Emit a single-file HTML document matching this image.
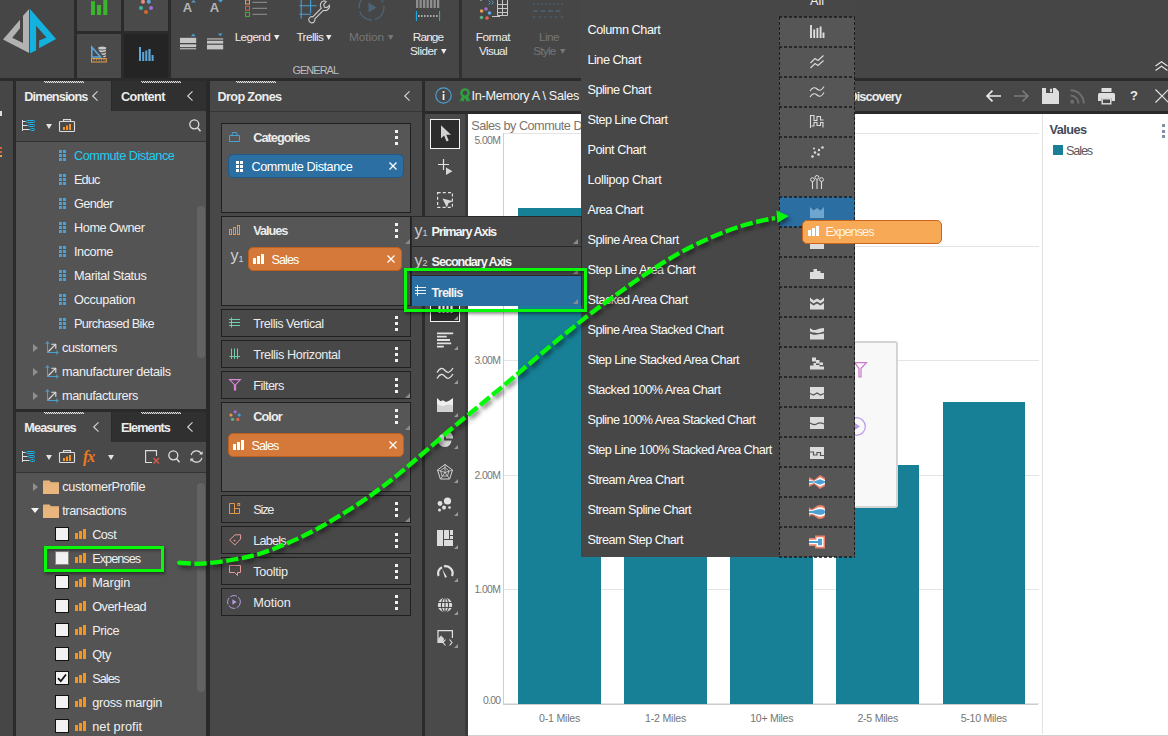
<!DOCTYPE html>
<html lang="en"><head><meta charset="utf-8"><title>Discovery</title><style>
html,body{margin:0;padding:0;background:#464646}
body{width:1168px;height:736px;overflow:hidden;background:#464646;position:relative;font-family:"Liberation Sans",sans-serif;}
.r{position:absolute;box-sizing:border-box}
.t{position:absolute;white-space:nowrap;}
svg{position:absolute;overflow:visible}
</style></head><body>
<!-- p1_base -->
<div class="r" style="left:0px;top:78px;width:1168px;height:3px;background:#2b2b2b;"></div>
<div class="r" style="left:74px;top:0px;width:3px;height:78px;background:#2b2b2b;"></div>
<div class="r" style="left:77px;top:0px;width:44px;height:31px;background:#4a4a4a;"></div>
<div class="r" style="left:124px;top:0px;width:44px;height:31px;background:#4a4a4a;"></div>
<div class="r" style="left:77px;top:34px;width:44px;height:44px;background:#4a4a4a;"></div>
<div class="r" style="left:124px;top:34px;width:44px;height:44px;background:#242424;"></div>
<div class="r" style="left:121px;top:0px;width:3px;height:78px;background:#2b2b2b;"></div>
<div class="r" style="left:77px;top:31px;width:93px;height:3px;background:#2b2b2b;"></div>
<div class="r" style="left:168px;top:0px;width:3px;height:78px;background:#2b2b2b;"></div>
<div class="r" style="left:459px;top:0px;width:3px;height:78px;background:#303030;"></div>
<div class="r" style="left:0px;top:81px;width:13px;height:655px;background:#464646;"></div>
<div class="r" style="left:13px;top:81px;width:3px;height:655px;background:#2b2b2b;"></div>
<div class="r" style="left:16px;top:81px;width:190px;height:30px;background:#303030;"></div>
<div class="r" style="left:16px;top:81px;width:95px;height:30px;background:#494949;"></div>
<div class="r" style="left:16px;top:111px;width:190px;height:30px;background:#494949;"></div>
<div class="r" style="left:16px;top:141px;width:190px;height:1px;background:#333;"></div>
<div class="r" style="left:16px;top:142px;width:190px;height:267px;background:#545454;"></div>
<div class="r" style="left:16px;top:409px;width:190px;height:3px;background:#2a2a2a;"></div>
<div class="r" style="left:16px;top:412px;width:190px;height:30px;background:#303030;"></div>
<div class="r" style="left:16px;top:412px;width:95px;height:30px;background:#494949;"></div>
<div class="r" style="left:16px;top:442px;width:190px;height:30px;background:#494949;"></div>
<div class="r" style="left:16px;top:471.5px;width:190px;height:1.5px;background:#333;"></div>
<div class="r" style="left:16px;top:473px;width:190px;height:263px;background:#545454;"></div>
<div class="r" style="left:206px;top:81px;width:4px;height:655px;background:#292929;"></div>
<div class="r" style="left:210px;top:81px;width:212px;height:30px;background:#484848;"></div>
<div class="r" style="left:210px;top:111px;width:212px;height:1px;background:#363636;"></div>
<div class="r" style="left:210px;top:112px;width:212px;height:624px;background:#484848;"></div>
<div class="r" style="left:422px;top:81px;width:3px;height:655px;background:#2b2b2b;"></div>
<div class="r" style="left:425px;top:81px;width:743px;height:30px;background:#484848;"></div>
<div class="r" style="left:425px;top:111px;width:743px;height:3px;background:#2a2a2a;"></div>
<div class="r" style="left:425px;top:114px;width:40px;height:622px;background:#4a4a4a;"></div>
<div class="r" style="left:465px;top:114px;width:3px;height:622px;background:#3a3a3a;"></div>
<div class="r" style="left:468px;top:114px;width:700px;height:622px;background:#ffffff;"></div>
<!-- p2_left -->
<div class="r" style="left:0px;top:111px;width:2px;height:5px;background:#e6dcd6;"></div>
<div class="r" style="left:0px;top:147px;width:2px;height:1.5px;background:#d9603a;"></div>
<div class="r" style="left:0px;top:151px;width:2px;height:1.5px;background:#d9603a;"></div>
<div class="r" style="left:0px;top:155px;width:2px;height:1.5px;background:#e8a050;"></div>
<div class="r" style="left:44px;top:81px;width:40px;height:1px;background:repeating-linear-gradient(90deg,#e4e4e4 0 1px,rgba(228,228,228,.25) 1px 2px)"></div><div class="r" style="left:45px;top:82px;width:39px;height:1px;background:repeating-linear-gradient(90deg,#e4e4e4 0 1px,rgba(228,228,228,.25) 1px 2px)"></div>
<div class="r" style="left:141px;top:81px;width:40px;height:1px;background:repeating-linear-gradient(90deg,#e4e4e4 0 1px,rgba(228,228,228,.25) 1px 2px)"></div><div class="r" style="left:142px;top:82px;width:39px;height:1px;background:repeating-linear-gradient(90deg,#e4e4e4 0 1px,rgba(228,228,228,.25) 1px 2px)"></div>
<div class="r" style="left:111px;top:81px;width:1px;height:30px;background:#2a2a2a;"></div>
<span class="t" style="top:88px;left:24.3px;font-size:12.7px;line-height:18px;color:#ececec;font-weight:700;letter-spacing:-0.868px;">Dimensions</span>
<svg style="left:92.4px;top:91px" width="6" height="10" viewBox="0 0 6 10"><path d="M5.5 0.3 L0.7 5 L5.5 9.7" fill="none" stroke="#d8d8d8" stroke-width="1.1"/></svg>
<span class="t" style="top:88px;left:121.0px;font-size:12.7px;line-height:18px;color:#ececec;font-weight:700;letter-spacing:-0.567px;">Content</span>
<svg style="left:187.3px;top:91px" width="6" height="10" viewBox="0 0 6 10"><path d="M5.5 0.3 L0.7 5 L5.5 9.7" fill="none" stroke="#d8d8d8" stroke-width="1.1"/></svg>
<svg style="left:22px;top:120px" width="13" height="11" viewBox="0 0 13 11"><path d="M0.5 0V11M0.5 1.5H3.5M0.5 5.5H5.5M0.5 9.5H7.5" stroke="#dddddd" stroke-width="1" fill="none"/><rect x="4.5" y="0.5" width="8" height="2" rx="1" fill="none" stroke="#19b5f1" stroke-width="1"/><rect x="6.5" y="4.5" width="6" height="2" rx="1" fill="none" stroke="#19b5f1" stroke-width="1"/><rect x="8.5" y="8.5" width="4" height="2" rx="1" fill="none" stroke="#19b5f1" stroke-width="1"/></svg>
<svg style="left:46px;top:124px" width="6" height="5" viewBox="0 0 6 5"><path d="M0 0H6 L3 5 Z" fill="#e4e4e4"/></svg>
<svg style="left:59px;top:119px" width="16" height="13" viewBox="0 0 16 13"><rect x="0.5" y="2.5" width="15" height="10" rx="0.8" fill="none" stroke="#ddd" stroke-width="1.1"/><path d="M4.5 2.5V0.6H11.5V2.5" fill="none" stroke="#ddd" stroke-width="1.1"/><rect x="4" y="8" width="2" height="3" fill="#f7941d"/><rect x="7" y="6.5" width="2" height="4.5" fill="#f7941d"/><rect x="10" y="5" width="2" height="6" fill="#f7941d"/></svg>
<svg style="left:189px;top:119px" width="12" height="13" viewBox="0 0 12 13"><circle cx="5.3" cy="5.3" r="4.5" fill="none" stroke="#ddd" stroke-width="1.3"/><path d="M8.6 8.8L11.5 12.2" stroke="#ddd" stroke-width="1.5"/></svg>
<svg style="left:59px;top:150px" width="7" height="11" viewBox="0 0 7 11"><rect x="0" y="0" width="3" height="3" fill="#4a9fd3"/><rect x="4" y="0" width="3" height="3" fill="#4a9fd3"/><rect x="0" y="4" width="3" height="3" fill="#4a9fd3"/><rect x="4" y="4" width="3" height="3" fill="#4a9fd3"/><rect x="0" y="8" width="3" height="3" fill="#4a9fd3"/><rect x="4" y="8" width="3" height="3" fill="#4a9fd3"/></svg>
<span class="t" style="top:147px;left:74.0px;font-size:12.7px;line-height:18px;color:#20cdf0;letter-spacing:-0.468px;">Commute Distance</span>
<svg style="left:59px;top:174px" width="7" height="11" viewBox="0 0 7 11"><rect x="0" y="0" width="3" height="3" fill="#4a9fd3"/><rect x="4" y="0" width="3" height="3" fill="#4a9fd3"/><rect x="0" y="4" width="3" height="3" fill="#4a9fd3"/><rect x="4" y="4" width="3" height="3" fill="#4a9fd3"/><rect x="0" y="8" width="3" height="3" fill="#4a9fd3"/><rect x="4" y="8" width="3" height="3" fill="#4a9fd3"/></svg>
<span class="t" style="top:171px;left:74.0px;font-size:12.7px;line-height:18px;color:#f0f0f0;letter-spacing:-0.887px;">Educ</span>
<svg style="left:59px;top:198px" width="7" height="11" viewBox="0 0 7 11"><rect x="0" y="0" width="3" height="3" fill="#4a9fd3"/><rect x="4" y="0" width="3" height="3" fill="#4a9fd3"/><rect x="0" y="4" width="3" height="3" fill="#4a9fd3"/><rect x="4" y="4" width="3" height="3" fill="#4a9fd3"/><rect x="0" y="8" width="3" height="3" fill="#4a9fd3"/><rect x="4" y="8" width="3" height="3" fill="#4a9fd3"/></svg>
<span class="t" style="top:195px;left:74.0px;font-size:12.7px;line-height:18px;color:#f0f0f0;letter-spacing:-0.560px;">Gender</span>
<svg style="left:59px;top:222px" width="7" height="11" viewBox="0 0 7 11"><rect x="0" y="0" width="3" height="3" fill="#4a9fd3"/><rect x="4" y="0" width="3" height="3" fill="#4a9fd3"/><rect x="0" y="4" width="3" height="3" fill="#4a9fd3"/><rect x="4" y="4" width="3" height="3" fill="#4a9fd3"/><rect x="0" y="8" width="3" height="3" fill="#4a9fd3"/><rect x="4" y="8" width="3" height="3" fill="#4a9fd3"/></svg>
<span class="t" style="top:219px;left:74.0px;font-size:12.7px;line-height:18px;color:#f0f0f0;letter-spacing:-0.421px;">Home Owner</span>
<svg style="left:59px;top:246px" width="7" height="11" viewBox="0 0 7 11"><rect x="0" y="0" width="3" height="3" fill="#4a9fd3"/><rect x="4" y="0" width="3" height="3" fill="#4a9fd3"/><rect x="0" y="4" width="3" height="3" fill="#4a9fd3"/><rect x="4" y="4" width="3" height="3" fill="#4a9fd3"/><rect x="0" y="8" width="3" height="3" fill="#4a9fd3"/><rect x="4" y="8" width="3" height="3" fill="#4a9fd3"/></svg>
<span class="t" style="top:243px;left:74.0px;font-size:12.7px;line-height:18px;color:#f0f0f0;letter-spacing:-0.441px;">Income</span>
<svg style="left:59px;top:270px" width="7" height="11" viewBox="0 0 7 11"><rect x="0" y="0" width="3" height="3" fill="#4a9fd3"/><rect x="4" y="0" width="3" height="3" fill="#4a9fd3"/><rect x="0" y="4" width="3" height="3" fill="#4a9fd3"/><rect x="4" y="4" width="3" height="3" fill="#4a9fd3"/><rect x="0" y="8" width="3" height="3" fill="#4a9fd3"/><rect x="4" y="8" width="3" height="3" fill="#4a9fd3"/></svg>
<span class="t" style="top:267px;left:74.0px;font-size:12.7px;line-height:18px;color:#f0f0f0;letter-spacing:-0.367px;">Marital Status</span>
<svg style="left:59px;top:294px" width="7" height="11" viewBox="0 0 7 11"><rect x="0" y="0" width="3" height="3" fill="#4a9fd3"/><rect x="4" y="0" width="3" height="3" fill="#4a9fd3"/><rect x="0" y="4" width="3" height="3" fill="#4a9fd3"/><rect x="4" y="4" width="3" height="3" fill="#4a9fd3"/><rect x="0" y="8" width="3" height="3" fill="#4a9fd3"/><rect x="4" y="8" width="3" height="3" fill="#4a9fd3"/></svg>
<span class="t" style="top:291px;left:74.0px;font-size:12.7px;line-height:18px;color:#f0f0f0;letter-spacing:-0.324px;">Occupation</span>
<svg style="left:59px;top:318px" width="7" height="11" viewBox="0 0 7 11"><rect x="0" y="0" width="3" height="3" fill="#4a9fd3"/><rect x="4" y="0" width="3" height="3" fill="#4a9fd3"/><rect x="0" y="4" width="3" height="3" fill="#4a9fd3"/><rect x="4" y="4" width="3" height="3" fill="#4a9fd3"/><rect x="0" y="8" width="3" height="3" fill="#4a9fd3"/><rect x="4" y="8" width="3" height="3" fill="#4a9fd3"/></svg>
<span class="t" style="top:315px;left:74.0px;font-size:12.7px;line-height:18px;color:#f0f0f0;letter-spacing:-0.639px;">Purchased Bike</span>
<svg style="left:33px;top:344.2px" width="5" height="8" viewBox="0 0 5 8"><path d="M0 0L5 4L0 8Z" fill="#8f8f8f"/></svg>
<svg style="left:45px;top:341.2px" width="14" height="14" viewBox="0 0 14 14"><path d="M2.5 1V11.5H13" fill="none" stroke="#4a9fd3" stroke-width="1.1"/><path d="M0.5 3L2.5 0.6L4.5 3" fill="none" stroke="#4a9fd3" stroke-width="1"/><path d="M11 9.5L13.4 11.5L11 13.5" fill="none" stroke="#4a9fd3" stroke-width="1"/><path d="M3.5 10.5L10.3 3.7" stroke="#e0e0e0" stroke-width="1.1"/><path d="M6.3 3.2H10.8V7.7" fill="none" stroke="#e0e0e0" stroke-width="1.1"/></svg>
<span class="t" style="top:339px;left:62.0px;font-size:12.7px;line-height:18px;color:#f0f0f0;letter-spacing:-0.397px;">customers</span>
<svg style="left:33px;top:368.2px" width="5" height="8" viewBox="0 0 5 8"><path d="M0 0L5 4L0 8Z" fill="#8f8f8f"/></svg>
<svg style="left:45px;top:365.2px" width="14" height="14" viewBox="0 0 14 14"><path d="M2.5 1V11.5H13" fill="none" stroke="#4a9fd3" stroke-width="1.1"/><path d="M0.5 3L2.5 0.6L4.5 3" fill="none" stroke="#4a9fd3" stroke-width="1"/><path d="M11 9.5L13.4 11.5L11 13.5" fill="none" stroke="#4a9fd3" stroke-width="1"/><path d="M3.5 10.5L10.3 3.7" stroke="#e0e0e0" stroke-width="1.1"/><path d="M6.3 3.2H10.8V7.7" fill="none" stroke="#e0e0e0" stroke-width="1.1"/></svg>
<span class="t" style="top:363px;left:62.0px;font-size:12.7px;line-height:18px;color:#f0f0f0;letter-spacing:-0.303px;">manufacturer details</span>
<svg style="left:33px;top:392.2px" width="5" height="8" viewBox="0 0 5 8"><path d="M0 0L5 4L0 8Z" fill="#8f8f8f"/></svg>
<svg style="left:45px;top:389.2px" width="14" height="14" viewBox="0 0 14 14"><path d="M2.5 1V11.5H13" fill="none" stroke="#4a9fd3" stroke-width="1.1"/><path d="M0.5 3L2.5 0.6L4.5 3" fill="none" stroke="#4a9fd3" stroke-width="1"/><path d="M11 9.5L13.4 11.5L11 13.5" fill="none" stroke="#4a9fd3" stroke-width="1"/><path d="M3.5 10.5L10.3 3.7" stroke="#e0e0e0" stroke-width="1.1"/><path d="M6.3 3.2H10.8V7.7" fill="none" stroke="#e0e0e0" stroke-width="1.1"/></svg>
<span class="t" style="top:387px;left:62.0px;font-size:12.7px;line-height:18px;color:#f0f0f0;letter-spacing:-0.398px;">manufacturers</span>
<div class="r" style="left:197px;top:206px;width:8px;height:152px;background:#636363;border-radius:4px"></div>
<div class="r" style="left:44px;top:412px;width:40px;height:1px;background:repeating-linear-gradient(90deg,#e4e4e4 0 1px,rgba(228,228,228,.25) 1px 2px)"></div><div class="r" style="left:45px;top:413px;width:39px;height:1px;background:repeating-linear-gradient(90deg,#e4e4e4 0 1px,rgba(228,228,228,.25) 1px 2px)"></div>
<div class="r" style="left:141px;top:412px;width:40px;height:1px;background:repeating-linear-gradient(90deg,#e4e4e4 0 1px,rgba(228,228,228,.25) 1px 2px)"></div><div class="r" style="left:142px;top:413px;width:39px;height:1px;background:repeating-linear-gradient(90deg,#e4e4e4 0 1px,rgba(228,228,228,.25) 1px 2px)"></div>
<div class="r" style="left:111px;top:412px;width:1px;height:30px;background:#2a2a2a;"></div>
<span class="t" style="top:419px;left:24.3px;font-size:12.7px;line-height:18px;color:#ececec;font-weight:700;letter-spacing:-0.887px;">Measures</span>
<svg style="left:92.8px;top:422px" width="6" height="10" viewBox="0 0 6 10"><path d="M5.5 0.3 L0.7 5 L5.5 9.7" fill="none" stroke="#d8d8d8" stroke-width="1.1"/></svg>
<span class="t" style="top:419px;left:121.0px;font-size:12.7px;line-height:18px;color:#ececec;font-weight:700;letter-spacing:-0.934px;">Elements</span>
<svg style="left:187.3px;top:422px" width="6" height="10" viewBox="0 0 6 10"><path d="M5.5 0.3 L0.7 5 L5.5 9.7" fill="none" stroke="#d8d8d8" stroke-width="1.1"/></svg>
<svg style="left:22px;top:451px" width="13" height="11" viewBox="0 0 13 11"><path d="M0.5 0V11M0.5 1.5H3.5M0.5 5.5H5.5M0.5 9.5H7.5" stroke="#dddddd" stroke-width="1" fill="none"/><rect x="4.5" y="0.5" width="8" height="2" rx="1" fill="none" stroke="#19b5f1" stroke-width="1"/><rect x="6.5" y="4.5" width="6" height="2" rx="1" fill="none" stroke="#19b5f1" stroke-width="1"/><rect x="8.5" y="8.5" width="4" height="2" rx="1" fill="none" stroke="#19b5f1" stroke-width="1"/></svg>
<svg style="left:46px;top:455px" width="6" height="5" viewBox="0 0 6 5"><path d="M0 0H6 L3 5 Z" fill="#e4e4e4"/></svg>
<svg style="left:59px;top:450px" width="16" height="13" viewBox="0 0 16 13"><rect x="0.5" y="2.5" width="15" height="10" rx="0.8" fill="none" stroke="#ddd" stroke-width="1.1"/><path d="M4.5 2.5V0.6H11.5V2.5" fill="none" stroke="#ddd" stroke-width="1.1"/><rect x="4" y="8" width="2" height="3" fill="#f7941d"/><rect x="7" y="6.5" width="2" height="4.5" fill="#f7941d"/><rect x="10" y="5" width="2" height="6" fill="#f7941d"/></svg>
<span class="t" style="top:446px;left:83.0px;font-size:16px;line-height:22px;color:#ef7a22;font-weight:700;font-style:italic;font-family:'Liberation Serif',serif;letter-spacing:-1px">fx</span>
<svg style="left:108px;top:455px" width="6" height="5" viewBox="0 0 6 5"><path d="M0 0H6 L3 5 Z" fill="#e4e4e4"/></svg>
<svg style="left:145px;top:450px" width="15" height="14" viewBox="0 0 15 14"><path d="M7 12.5H0.6V0.6H11.5V6" fill="none" stroke="#ddd" stroke-width="1.1"/><path d="M8.5 8L14 13.5M14 8L8.5 13.5" stroke="#e05a4a" stroke-width="1.3"/></svg>
<svg style="left:168px;top:450px" width="12" height="13" viewBox="0 0 12 13"><circle cx="5.3" cy="5.3" r="4.5" fill="none" stroke="#ddd" stroke-width="1.3"/><path d="M8.6 8.8L11.5 12.2" stroke="#ddd" stroke-width="1.5"/></svg>
<svg style="left:190px;top:450px" width="13" height="13" viewBox="0 0 13 13"><path d="M1.2 5.2A5.4 5.4 0 0 1 11.3 3.8" fill="none" stroke="#ddd" stroke-width="1.2"/><path d="M11.8 7.8A5.4 5.4 0 0 1 1.7 9.2" fill="none" stroke="#ddd" stroke-width="1.2"/><path d="M12.6 1.2V4.6H9.2Z" fill="#ddd"/><path d="M0.4 11.8V8.4H3.8Z" fill="#ddd"/></svg>
<svg style="left:33px;top:483px" width="5" height="8" viewBox="0 0 5 8"><path d="M0 0L5 4L0 8Z" fill="#8f8f8f"/></svg>
<svg style="left:43px;top:480px" width="16" height="14" viewBox="0 0 16 14"><path d="M0 1.2Q0 0.5 0.7 0.5H6.5L8 2.2H16V14H0Z" fill="#e9b77e"/><path d="M0 3H16" stroke="#d9a468" stroke-width="0.6"/></svg>
<span class="t" style="top:478px;left:62.2px;font-size:12.7px;line-height:18px;color:#f0f0f0;letter-spacing:-0.348px;">customerProfile</span>
<svg style="left:31.4px;top:507.6px" width="8" height="5" viewBox="0 0 8 5"><path d="M0 0H8L4 5Z" fill="#f4f4f4"/></svg>
<svg style="left:43px;top:504px" width="16" height="14" viewBox="0 0 16 14"><path d="M0 1.2Q0 0.5 0.7 0.5H6.5L8 2.2H16V14H0Z" fill="#e9b77e"/><path d="M0 3H16" stroke="#d9a468" stroke-width="0.6"/></svg>
<span class="t" style="top:502px;left:62.2px;font-size:12.7px;line-height:18px;color:#f0f0f0;letter-spacing:-0.373px;">transactions</span>
<div class="r" style="left:55px;top:527px;width:14px;height:14px;background:#f2f2f2;border:1px solid #111"></div>
<svg style="left:75px;top:529px" width="11" height="10" viewBox="0 0 11 10"><rect x="0" y="4" width="3" height="6" fill="#f7941d"/><rect x="4" y="2" width="3" height="8" fill="#f7941d"/><rect x="8" y="0" width="3" height="10" fill="#f7941d"/></svg>
<span class="t" style="top:526px;left:92.2px;font-size:12.7px;line-height:18px;color:#f0f0f0;letter-spacing:-0.528px;">Cost</span>
<div class="r" style="left:55px;top:551px;width:14px;height:14px;background:#f2f2f2;border:1px solid #8a8a8a"></div>
<svg style="left:75px;top:553px" width="11" height="10" viewBox="0 0 11 10"><rect x="0" y="4" width="3" height="6" fill="#f7941d"/><rect x="4" y="2" width="3" height="8" fill="#f7941d"/><rect x="8" y="0" width="3" height="10" fill="#f7941d"/></svg>
<span class="t" style="top:550px;left:92.2px;font-size:12.7px;line-height:18px;color:#f0f0f0;letter-spacing:-0.972px;">Expenses</span>
<div class="r" style="left:55px;top:575px;width:14px;height:14px;background:#f2f2f2;border:1px solid #111"></div>
<svg style="left:75px;top:577px" width="11" height="10" viewBox="0 0 11 10"><rect x="0" y="4" width="3" height="6" fill="#f7941d"/><rect x="4" y="2" width="3" height="8" fill="#f7941d"/><rect x="8" y="0" width="3" height="10" fill="#f7941d"/></svg>
<span class="t" style="top:574px;left:92.2px;font-size:12.7px;line-height:18px;color:#f0f0f0;letter-spacing:-0.137px;">Margin</span>
<div class="r" style="left:55px;top:599px;width:14px;height:14px;background:#f2f2f2;border:1px solid #111"></div>
<svg style="left:75px;top:601px" width="11" height="10" viewBox="0 0 11 10"><rect x="0" y="4" width="3" height="6" fill="#f7941d"/><rect x="4" y="2" width="3" height="8" fill="#f7941d"/><rect x="8" y="0" width="3" height="10" fill="#f7941d"/></svg>
<span class="t" style="top:598px;left:92.2px;font-size:12.7px;line-height:18px;color:#f0f0f0;letter-spacing:-0.485px;">OverHead</span>
<div class="r" style="left:55px;top:623px;width:14px;height:14px;background:#f2f2f2;border:1px solid #111"></div>
<svg style="left:75px;top:625px" width="11" height="10" viewBox="0 0 11 10"><rect x="0" y="4" width="3" height="6" fill="#f7941d"/><rect x="4" y="2" width="3" height="8" fill="#f7941d"/><rect x="8" y="0" width="3" height="10" fill="#f7941d"/></svg>
<span class="t" style="top:622px;left:92.2px;font-size:12.7px;line-height:18px;color:#f0f0f0;letter-spacing:-0.387px;">Price</span>
<div class="r" style="left:55px;top:647px;width:14px;height:14px;background:#f2f2f2;border:1px solid #111"></div>
<svg style="left:75px;top:649px" width="11" height="10" viewBox="0 0 11 10"><rect x="0" y="4" width="3" height="6" fill="#f7941d"/><rect x="4" y="2" width="3" height="8" fill="#f7941d"/><rect x="8" y="0" width="3" height="10" fill="#f7941d"/></svg>
<span class="t" style="top:646px;left:92.2px;font-size:12.7px;line-height:18px;color:#f0f0f0;letter-spacing:-0.252px;">Qty</span>
<div class="r" style="left:55px;top:671px;width:14px;height:14px;background:#f2f2f2;border:1px solid #111"></div><svg style="left:57px;top:673px" width="10" height="10" viewBox="0 0 10 10"><path d="M1 5.2L3.8 8.2L9 1.5" fill="none" stroke="#111" stroke-width="1.8"/></svg>
<svg style="left:75px;top:673px" width="11" height="10" viewBox="0 0 11 10"><rect x="0" y="4" width="3" height="6" fill="#f7941d"/><rect x="4" y="2" width="3" height="8" fill="#f7941d"/><rect x="8" y="0" width="3" height="10" fill="#f7941d"/></svg>
<span class="t" style="top:670px;left:92.2px;font-size:12.7px;line-height:18px;color:#f0f0f0;letter-spacing:-0.954px;">Sales</span>
<div class="r" style="left:55px;top:695px;width:14px;height:14px;background:#f2f2f2;border:1px solid #111"></div>
<svg style="left:75px;top:697px" width="11" height="10" viewBox="0 0 11 10"><rect x="0" y="4" width="3" height="6" fill="#f7941d"/><rect x="4" y="2" width="3" height="8" fill="#f7941d"/><rect x="8" y="0" width="3" height="10" fill="#f7941d"/></svg>
<span class="t" style="top:694px;left:92.2px;font-size:12.7px;line-height:18px;color:#f0f0f0;letter-spacing:-0.284px;">gross margin</span>
<div class="r" style="left:55px;top:719px;width:14px;height:14px;background:#f2f2f2;border:1px solid #111"></div>
<svg style="left:75px;top:721px" width="11" height="10" viewBox="0 0 11 10"><rect x="0" y="4" width="3" height="6" fill="#f7941d"/><rect x="4" y="2" width="3" height="8" fill="#f7941d"/><rect x="8" y="0" width="3" height="10" fill="#f7941d"/></svg>
<span class="t" style="top:718px;left:92.2px;font-size:12.7px;line-height:18px;color:#f0f0f0;letter-spacing:0.058px;">net profit</span>
<div class="r" style="left:197px;top:483px;width:8px;height:209px;background:#636363;border-radius:4px"></div>
<!-- p3_drop -->
<div class="r" style="left:236px;top:81px;width:40px;height:1px;background:repeating-linear-gradient(90deg,#e4e4e4 0 1px,rgba(228,228,228,.25) 1px 2px)"></div><div class="r" style="left:237px;top:82px;width:39px;height:1px;background:repeating-linear-gradient(90deg,#e4e4e4 0 1px,rgba(228,228,228,.25) 1px 2px)"></div>
<span class="t" style="top:88px;left:217.5px;font-size:12.7px;line-height:18px;color:#ececec;font-weight:700;letter-spacing:-0.656px;">Drop Zones</span>
<svg style="left:403.5px;top:91px" width="6" height="10" viewBox="0 0 6 10"><path d="M5.5 0.3 L0.7 5 L5.5 9.7" fill="none" stroke="#d8d8d8" stroke-width="1.1"/></svg>
<div class="r" style="left:221px;top:123px;width:190px;height:90px;background:#565656;border:1px solid #202020"></div>
<svg style="left:229px;top:131px" width="12" height="11" viewBox="0 0 12 11"><path d="M0.5 4.5H10.5V10.5H0.5Z M2.8 4.5L3.6 1.5H7.4L8.2 4.5" fill="none" stroke="#4a9fd3" stroke-width="1"/></svg><span class="t" style="top:129px;left:253.3px;font-size:12.7px;line-height:18px;color:#ececec;font-weight:700;letter-spacing:-0.964px;">Categories</span><div class="r" style="left:395px;top:130px;width:3px;height:3px;background:#f2f2f2;"></div><div class="r" style="left:395px;top:136px;width:3px;height:3px;background:#f2f2f2;"></div><div class="r" style="left:395px;top:142px;width:3px;height:3px;background:#f2f2f2;"></div>
<div class="r" style="left:228px;top:154px;width:176px;height:24px;background:#2b6fa3;border:1px solid #1f5a88;border-radius:5px"></div>
<svg style="left:236px;top:161px" width="7" height="11" viewBox="0 0 7 11"><rect x="0" y="0" width="3" height="3" fill="#ffffff"/><rect x="4" y="0" width="3" height="3" fill="#ffffff"/><rect x="0" y="4" width="3" height="3" fill="#ffffff"/><rect x="4" y="4" width="3" height="3" fill="#ffffff"/><rect x="0" y="8" width="3" height="3" fill="#ffffff"/><rect x="4" y="8" width="3" height="3" fill="#ffffff"/></svg>
<span class="t" style="top:158px;left:251.5px;font-size:12.7px;line-height:18px;color:#fff;letter-spacing:-0.437px;">Commute Distance</span>
<svg style="left:389px;top:162px" width="8" height="8" viewBox="0 0 8 8"><path d="M0.5 0.5L7.5 7.5M7.5 0.5L0.5 7.5" stroke="#fff" stroke-width="1.3"/></svg>
<div class="r" style="left:221px;top:216px;width:190px;height:90px;background:#565656;border:1px solid #202020"></div>
<svg style="left:229px;top:224px" width="12" height="11" viewBox="0 0 12 11"><rect x="0.5" y="5.5" width="2" height="5" fill="none" stroke="#e8964a" stroke-width="1"/><rect x="4.5" y="3.5" width="2" height="7" fill="none" stroke="#e8964a" stroke-width="1"/><rect x="8.5" y="1.5" width="2" height="9" fill="none" stroke="#e8964a" stroke-width="1"/></svg><span class="t" style="top:222px;left:253.3px;font-size:12.7px;line-height:18px;color:#ececec;font-weight:700;letter-spacing:-1.041px;">Values</span><div class="r" style="left:395px;top:223px;width:3px;height:3px;background:#f2f2f2;"></div><div class="r" style="left:395px;top:229px;width:3px;height:3px;background:#f2f2f2;"></div><div class="r" style="left:395px;top:235px;width:3px;height:3px;background:#f2f2f2;"></div>
<svg style="left:405px;top:239px" width="5" height="5" viewBox="0 0 5 5"><path d="M5 0V5H0Z" fill="#8a8a8a"/></svg>
<span class="t" style="top:245px;left:230.5px;font-size:16px;line-height:22px;color:#d0d0d0;">y</span>
<span class="t" style="top:252px;left:238.6px;font-size:9px;line-height:15px;color:#d0d0d0;">1</span>
<div class="r" style="left:248px;top:247px;width:154px;height:24px;background:#d4793a;border:1px solid #bd601f;border-radius:5px"></div>
<svg style="left:253px;top:254px" width="11" height="10" viewBox="0 0 11 10"><rect x="0" y="4" width="3" height="6" fill="#ffffff"/><rect x="4" y="2" width="3" height="8" fill="#ffffff"/><rect x="8" y="0" width="3" height="10" fill="#ffffff"/></svg>
<span class="t" style="top:251px;left:271.5px;font-size:12.7px;line-height:18px;color:#fff;letter-spacing:-0.954px;">Sales</span>
<svg style="left:387px;top:255.3px" width="8" height="8" viewBox="0 0 8 8"><path d="M0.5 0.5L7.5 7.5M7.5 0.5L0.5 7.5" stroke="#fff" stroke-width="1.3"/></svg>
<div class="r" style="left:221px;top:309px;width:190px;height:28px;background:#484848;border:1px solid #202020"></div>
<svg style="left:229px;top:317px" width="12" height="11" viewBox="0 0 12 11"><path d="M2.5 0.5V10.5M0 2.5H11M0 5.5H11M0 8.5H11" fill="none" stroke="#6fcfa8" stroke-width="1"/></svg><span class="t" style="top:315px;left:253.3px;font-size:12.7px;line-height:18px;color:#ececec;letter-spacing:-0.511px;">Trellis Vertical</span><div class="r" style="left:395px;top:316px;width:3px;height:3px;background:#f2f2f2;"></div><div class="r" style="left:395px;top:322px;width:3px;height:3px;background:#f2f2f2;"></div><div class="r" style="left:395px;top:328px;width:3px;height:3px;background:#f2f2f2;"></div>
<div class="r" style="left:221px;top:340px;width:190px;height:28px;background:#484848;border:1px solid #202020"></div>
<svg style="left:229px;top:348px" width="12" height="11" viewBox="0 0 12 11"><path d="M0.5 8.5H11M2.5 0.5V11M5.5 0.5V11M8.5 0.5V11" fill="none" stroke="#6fcfa8" stroke-width="1"/></svg><span class="t" style="top:346px;left:253.3px;font-size:12.7px;line-height:18px;color:#ececec;letter-spacing:-0.394px;">Trellis Horizontal</span><div class="r" style="left:395px;top:347px;width:3px;height:3px;background:#f2f2f2;"></div><div class="r" style="left:395px;top:353px;width:3px;height:3px;background:#f2f2f2;"></div><div class="r" style="left:395px;top:359px;width:3px;height:3px;background:#f2f2f2;"></div>
<div class="r" style="left:221px;top:371px;width:190px;height:28px;background:#484848;border:1px solid #202020"></div>
<svg style="left:229px;top:379px" width="12" height="11" viewBox="0 0 12 11"><path d="M0.6 0.6H11.4L6.6 5.6V11H5.4V5.6Z" fill="none" stroke="#df86df" stroke-width="1.1"/></svg><span class="t" style="top:377px;left:253.3px;font-size:12.7px;line-height:18px;color:#ececec;letter-spacing:-0.582px;">Filters</span><div class="r" style="left:395px;top:378px;width:3px;height:3px;background:#f2f2f2;"></div><div class="r" style="left:395px;top:384px;width:3px;height:3px;background:#f2f2f2;"></div><div class="r" style="left:395px;top:390px;width:3px;height:3px;background:#f2f2f2;"></div>
<svg style="left:405px;top:393px" width="5" height="5" viewBox="0 0 5 5"><path d="M5 0V5H0Z" fill="#8a8a8a"/></svg>
<div class="r" style="left:221px;top:402px;width:190px;height:90px;background:#565656;border:1px solid #202020"></div>
<svg style="left:229px;top:410px" width="12" height="11" viewBox="0 0 12 11"><circle cx="6.2" cy="1.8" r="1.6" fill="#a86fd6"/><circle cx="2" cy="5" r="1.6" fill="#e8964a"/><circle cx="10.2" cy="5" r="1.6" fill="#4a9fd3"/><circle cx="3.6" cy="9.4" r="1.6" fill="#5fae8a"/><circle cx="8.8" cy="9.4" r="1.6" fill="#e2664a"/></svg><span class="t" style="top:408px;left:253.3px;font-size:12.7px;line-height:18px;color:#ececec;font-weight:700;letter-spacing:-0.932px;">Color</span><div class="r" style="left:395px;top:409px;width:3px;height:3px;background:#f2f2f2;"></div><div class="r" style="left:395px;top:415px;width:3px;height:3px;background:#f2f2f2;"></div><div class="r" style="left:395px;top:421px;width:3px;height:3px;background:#f2f2f2;"></div>
<svg style="left:405px;top:425px" width="5" height="5" viewBox="0 0 5 5"><path d="M5 0V5H0Z" fill="#8a8a8a"/></svg>
<div class="r" style="left:228px;top:433px;width:176px;height:24px;background:#d4793a;border:1px solid #bd601f;border-radius:5px"></div>
<svg style="left:233px;top:440px" width="11" height="10" viewBox="0 0 11 10"><rect x="0" y="4" width="3" height="6" fill="#ffffff"/><rect x="4" y="2" width="3" height="8" fill="#ffffff"/><rect x="8" y="0" width="3" height="10" fill="#ffffff"/></svg>
<span class="t" style="top:437px;left:251.5px;font-size:12.7px;line-height:18px;color:#fff;letter-spacing:-0.954px;">Sales</span>
<svg style="left:389px;top:441.3px" width="8" height="8" viewBox="0 0 8 8"><path d="M0.5 0.5L7.5 7.5M7.5 0.5L0.5 7.5" stroke="#fff" stroke-width="1.3"/></svg>
<div class="r" style="left:221px;top:495px;width:190px;height:28px;background:#484848;border:1px solid #202020"></div>
<svg style="left:229px;top:503px" width="12" height="11" viewBox="0 0 12 11"><path d="M0.5 0.5H5.5V10.5H0.5Z M5.5 5.5H10.5V10.5H5.5" fill="none" stroke="#e8964a" stroke-width="1"/><rect x="8.7" y="0.5" width="2" height="2" fill="none" stroke="#e8964a" stroke-width="0.9"/></svg><span class="t" style="top:501px;left:253.3px;font-size:12.7px;line-height:18px;color:#ececec;letter-spacing:-1.226px;">Size</span><div class="r" style="left:395px;top:502px;width:3px;height:3px;background:#f2f2f2;"></div><div class="r" style="left:395px;top:508px;width:3px;height:3px;background:#f2f2f2;"></div><div class="r" style="left:395px;top:514px;width:3px;height:3px;background:#f2f2f2;"></div>
<svg style="left:405px;top:517px" width="5" height="5" viewBox="0 0 5 5"><path d="M5 0V5H0Z" fill="#8a8a8a"/></svg>
<div class="r" style="left:221px;top:526px;width:190px;height:28px;background:#484848;border:1px solid #202020"></div>
<svg style="left:229px;top:534px" width="12" height="11" viewBox="0 0 12 11"><path d="M0.6 6L6 0.8H11.6V5L5.8 11Z" fill="none" stroke="#e89a9a" stroke-width="1"/><circle cx="5.5" cy="6.6" r="0.9" fill="#e89a9a"/></svg><span class="t" style="top:532px;left:253.3px;font-size:12.7px;line-height:18px;color:#ececec;letter-spacing:-0.837px;">Labels</span><div class="r" style="left:395px;top:533px;width:3px;height:3px;background:#f2f2f2;"></div><div class="r" style="left:395px;top:539px;width:3px;height:3px;background:#f2f2f2;"></div><div class="r" style="left:395px;top:545px;width:3px;height:3px;background:#f2f2f2;"></div>
<div class="r" style="left:221px;top:557px;width:190px;height:28px;background:#484848;border:1px solid #202020"></div>
<svg style="left:229px;top:565px" width="12" height="11" viewBox="0 0 12 11"><path d="M0.5 0.5H11.5V7.5H8.5V10.5L5.5 7.5H0.5Z" fill="none" stroke="#e89a9a" stroke-width="1"/></svg><span class="t" style="top:563px;left:253.3px;font-size:12.7px;line-height:18px;color:#ececec;letter-spacing:-0.302px;">Tooltip</span><div class="r" style="left:395px;top:564px;width:3px;height:3px;background:#f2f2f2;"></div><div class="r" style="left:395px;top:570px;width:3px;height:3px;background:#f2f2f2;"></div><div class="r" style="left:395px;top:576px;width:3px;height:3px;background:#f2f2f2;"></div>
<div class="r" style="left:221px;top:588px;width:190px;height:28px;background:#484848;border:1px solid #202020"></div>
<svg style="left:227px;top:594.5px" width="14" height="14" viewBox="0 0 14 14"><circle cx="7" cy="7" r="6.4" fill="none" stroke="#b79be0" stroke-width="1" stroke-dasharray="7 1.5"/><path d="M5.4 4.2L9.6 7L5.4 9.8Z" fill="#b79be0"/></svg><span class="t" style="top:594px;left:253.3px;font-size:12.7px;line-height:18px;color:#ececec;letter-spacing:-0.103px;">Motion</span><div class="r" style="left:395px;top:595px;width:3px;height:3px;background:#f2f2f2;"></div><div class="r" style="left:395px;top:601px;width:3px;height:3px;background:#f2f2f2;"></div><div class="r" style="left:395px;top:607px;width:3px;height:3px;background:#f2f2f2;"></div>
<!-- p4_chart -->
<svg style="left:434.5px;top:87px" width="17" height="17" viewBox="0 0 17 17"><circle cx="8.5" cy="8.5" r="7.7" fill="none" stroke="#4a9fd3" stroke-width="1.2"/><rect x="7.7" y="7" width="1.7" height="6" fill="#f2f2f2"/><rect x="7.7" y="4" width="1.7" height="1.9" fill="#f2f2f2"/></svg>
<svg style="left:458.5px;top:88px" width="12" height="14" viewBox="0 0 12 14"><circle cx="6" cy="5" r="3.6" fill="none" stroke="#2fa03f" stroke-width="2.4"/><path d="M3 8.5L0.3 13.5L3 12.6L4.2 14L6 9.8L7.8 14L9 12.6L11.7 13.5L9 8.5Z" fill="#2fa03f"/></svg>
<span class="t" style="top:87px;left:471.6px;font-size:12.7px;line-height:18px;color:#f4f4f4;letter-spacing:-0.323px;">In-Memory A \ Sales</span>
<span class="t" style="top:88px;left:848.5px;font-size:12.7px;line-height:18px;color:#ececec;font-weight:700;letter-spacing:-0.913px;">Discovery</span>
<svg style="left:986px;top:90px" width="15" height="12" viewBox="0 0 15 12"><path d="M15 6H1.2M6.5 0.6L1.1 6L6.5 11.4" fill="none" stroke="#ececec" stroke-width="1.7"/></svg>
<svg style="left:1014px;top:90px" width="15" height="12" viewBox="0 0 15 12"><path d="M0 6H13.8M8.5 0.6L13.9 6L8.5 11.4" fill="none" stroke="#7a7a7a" stroke-width="1.6"/></svg>
<svg style="left:1042px;top:88px" width="17" height="16" viewBox="0 0 17 16"><path d="M0 0H13.5L17 3.5V16H0Z" fill="#dedede"/><rect x="4" y="0" width="7" height="5" fill="#4a4a4a"/><rect x="8" y="0.8" width="2" height="3.4" fill="#dedede"/></svg>
<svg style="left:1070px;top:89px" width="15" height="15" viewBox="0 0 15 15"><circle cx="2.2" cy="12.8" r="2" fill="#6f6f6f"/><path d="M0.5 6.5A8 8 0 0 1 8.5 14.5" fill="none" stroke="#6f6f6f" stroke-width="2"/><path d="M0.5 1.2A13.3 13.3 0 0 1 13.8 14.5" fill="none" stroke="#6f6f6f" stroke-width="2"/></svg>
<svg style="left:1098px;top:88px" width="17" height="16" viewBox="0 0 17 16"><rect x="3.5" y="0" width="10" height="4" fill="#dedede"/><path d="M0 6.5Q0 5 1.5 5H15.5Q17 5 17 6.5V13H13.5V10H3.5V13H0Z" fill="#dedede"/><rect x="4.2" y="10.8" width="8.6" height="5" fill="none" stroke="#dedede" stroke-width="1.4"/></svg>
<span class="t" style="top:86px;left:1130.0px;font-size:13px;line-height:19px;color:#ececec;font-weight:700;">?</span>
<svg style="left:1155px;top:89px" width="14" height="14" viewBox="0 0 14 14"><path d="M0.5 0.5L13.5 13.5M13.5 0.5L0.5 13.5" stroke="#e2e2e2" stroke-width="1.2"/></svg>
<div class="r" style="left:430px;top:119px;width:30px;height:30px;background:#2c2c2c;border:1px solid #f4f4f4"></div>
<svg style="left:437px;top:125.45px" width="16" height="16.5" viewBox="0 0 16 16.5"><path d="M4 0.3V13.4L7.1 10.5L9.5 16.4L11.7 15.4L9.3 9.7H14Z" fill="#d2d2d2"/></svg>
<svg style="left:438px;top:158.5px" width="16" height="16" viewBox="0 0 16 16"><path d="M5.5 0V11M0 5.5H11" stroke="#e2e2e2" stroke-width="1.2" fill="none"/><path d="M8 8.5V16L14.5 12.2Z" fill="#d6d6d6"/></svg>
<svg style="left:437px;top:192px" width="16" height="16" viewBox="0 0 16 16"><rect x="0.6" y="0.6" width="14.8" height="14.8" fill="none" stroke="#e2e2e2" stroke-width="1.2" stroke-dasharray="3 2.2"/><path d="M5.5 6.6L16.2 9.2L11.6 10.9L9.8 15.6Z" fill="#d6d6d6"/></svg>
<div class="r" style="left:430px;top:292px;width:30px;height:30px;background:#2c2c2c;border:1px solid #f4f4f4"></div>
<svg style="left:437.5px;top:298.4px" width="16" height="16" viewBox="0 0 16 16"><path d="M1.5 1V15M5.5 4V15M9.5 2V15M13.5 7V15" stroke="#e2e2e2" stroke-width="2.2"/></svg>
<svg style="left:454px;top:316px" width="4" height="4" viewBox="0 0 4 4"><path d="M4 0V4H0Z" fill="#9a9a9a"/></svg>
<svg style="left:437px;top:331.5px" width="16" height="16" viewBox="0 0 16 16"><path d="M0 1.4H16.2M0 4.7H9.7M0 8H13M0 11.3H14.2M0 14.6H6.8" stroke="#e2e2e2" stroke-width="1.8"/></svg>
<svg style="left:453.5px;top:346px" width="4" height="4" viewBox="0 0 4 4"><path d="M4 0V4H0Z" fill="#9a9a9a"/></svg>
<svg style="left:437px;top:365.5px" width="16" height="16" viewBox="0 0 16 16"><path d="M0 6.5C3 1.5 5.5 1.5 8 4.5S13 7 16 2" fill="none" stroke="#e2e2e2" stroke-width="1.3"/><path d="M0 12.5C3 7.5 5.5 7.5 8 10.5S13 13 16 8" fill="none" stroke="#e2e2e2" stroke-width="1.3"/></svg>
<svg style="left:453.5px;top:380px" width="4" height="4" viewBox="0 0 4 4"><path d="M4 0V4H0Z" fill="#9a9a9a"/></svg>
<svg style="left:437px;top:398.3px" width="16" height="16" viewBox="0 0 16 16"><path d="M0 0L3.5 3.2L6 2.2L9 4L12.5 2.5L16 0V14H0Z" fill="#efefef"/><path d="M0 6C3 8 6 8.3 8 7.5S13 6 16 7.5V14H0Z" fill="#d2d2d2"/></svg>
<svg style="left:453.5px;top:412.8px" width="4" height="4" viewBox="0 0 4 4"><path d="M4 0V4H0Z" fill="#9a9a9a"/></svg>
<svg style="left:437px;top:430.7px" width="16" height="16" viewBox="0 0 16 16"><path d="M7 2.5A6.8 6.8 0 1 0 14.5 9.5H7Z" fill="#d6d6d6"/><path d="M9 0A7 7 0 0 1 16 7.5H9Z" fill="#efefef"/></svg>
<svg style="left:453.5px;top:445.2px" width="4" height="4" viewBox="0 0 4 4"><path d="M4 0V4H0Z" fill="#9a9a9a"/></svg>
<svg style="left:437px;top:464px" width="16" height="16" viewBox="0 0 16 16"><path d="M8 0.5L15.5 6L12.6 15H3.4L0.5 6Z" fill="none" stroke="#d6d6d6" stroke-width="1"/><path d="M8 0.5V8.5L15.5 6M8 8.5L12.6 15M8 8.5L3.4 15M8 8.5L0.5 6" stroke="#d6d6d6" stroke-width="0.8" fill="none"/><path d="M8 3.5L12 7L10.5 12H5L3.5 6.5Z" fill="none" stroke="#d6d6d6" stroke-width="0.8"/></svg>
<svg style="left:453.5px;top:478.5px" width="4" height="4" viewBox="0 0 4 4"><path d="M4 0V4H0Z" fill="#9a9a9a"/></svg>
<svg style="left:437px;top:497px" width="16" height="16" viewBox="0 0 16 16"><circle cx="10.5" cy="4" r="3.6" fill="#e2e2e2"/><circle cx="3" cy="6.5" r="2.4" fill="#e2e2e2"/><circle cx="7" cy="10.5" r="2" fill="#e2e2e2"/><circle cx="2.5" cy="13" r="1.5" fill="#e2e2e2"/><circle cx="12.5" cy="10.5" r="1.3" fill="#e2e2e2"/></svg>
<svg style="left:453.5px;top:511.5px" width="4" height="4" viewBox="0 0 4 4"><path d="M4 0V4H0Z" fill="#9a9a9a"/></svg>
<svg style="left:437px;top:530px" width="16" height="16" viewBox="0 0 16 16"><rect x="0" y="0" width="6" height="16" fill="#dcdcdc"/><rect x="7" y="0" width="5" height="9" fill="#dcdcdc"/><rect x="13" y="0" width="3" height="5" fill="#dcdcdc"/><rect x="13" y="6" width="3" height="3" fill="#dcdcdc"/><rect x="7" y="10" width="9" height="6" fill="#dcdcdc"/></svg>
<svg style="left:453.5px;top:544.5px" width="4" height="4" viewBox="0 0 4 4"><path d="M4 0V4H0Z" fill="#9a9a9a"/></svg>
<svg style="left:437px;top:563.5px" width="16" height="16" viewBox="0 0 16 16"><path d="M1.5 12A7 7 0 0 1 5 3.2" fill="none" stroke="#e2e2e2" stroke-width="2.2"/><path d="M7 2.4A7 7 0 0 1 15 12" fill="none" stroke="#e2e2e2" stroke-width="2.2"/><path d="M5.2 5L10 13L8 13.8Z" fill="#e2e2e2"/></svg>
<svg style="left:453.5px;top:578px" width="4" height="4" viewBox="0 0 4 4"><path d="M4 0V4H0Z" fill="#9a9a9a"/></svg>
<svg style="left:437px;top:596.5px" width="16" height="16" viewBox="0 0 16 16"><circle cx="8" cy="8" r="7.2" fill="#dcdcdc"/><path d="M0.8 5.5H15.2M0.8 10.5H15.2M8 0.8V15.2" stroke="#4a4a4a" stroke-width="1.1" fill="none"/><ellipse cx="8" cy="8" rx="3.6" ry="7.2" fill="none" stroke="#4a4a4a" stroke-width="1.1"/></svg>
<svg style="left:453.5px;top:611px" width="4" height="4" viewBox="0 0 4 4"><path d="M4 0V4H0Z" fill="#9a9a9a"/></svg>
<svg style="left:437px;top:629.5px" width="16" height="16" viewBox="0 0 16 16"><path d="M1 13V0.6H15.4V8" fill="none" stroke="#e2e2e2" stroke-width="1.2"/><path d="M1 13V9L4 5.5L7 8.5L6 13Z" fill="#d6d6d6"/><path d="M8.5 9.5L6 12.5L8.5 15.5M12.5 9.5L15 12.5L12.5 15.5" fill="none" stroke="#e2e2e2" stroke-width="1.1"/></svg>
<svg style="left:453.5px;top:644px" width="4" height="4" viewBox="0 0 4 4"><path d="M4 0V4H0Z" fill="#9a9a9a"/></svg>
<span class="t" style="top:117px;left:471.2px;font-size:12.7px;line-height:18px;color:#7b746e;letter-spacing:-0.499px;">Sales by Commute D</span>
<div class="r" style="left:504px;top:703px;width:535px;height:1px;background:#e4e4e4;"></div>
<div class="r" style="left:504px;top:589px;width:535px;height:1px;background:#e4e4e4;"></div>
<div class="r" style="left:504px;top:475px;width:535px;height:1px;background:#e4e4e4;"></div>
<div class="r" style="left:504px;top:360px;width:535px;height:1px;background:#e4e4e4;"></div>
<div class="r" style="left:504px;top:246px;width:535px;height:1px;background:#e4e4e4;"></div>
<div class="r" style="left:504px;top:133px;width:535px;height:1px;background:#e4e4e4;"></div>
<div class="r" style="left:504px;top:704px;width:534px;height:1px;background:#cdcdcd;"></div>
<div class="r" style="left:503px;top:133px;width:1px;height:572px;background:#cfcfcf;"></div>
<span class="t" style="top:693px;left:482.9px;font-size:10.4px;line-height:16px;color:#767676;letter-spacing:-0.685px;">0.00</span>
<span class="t" style="top:582px;left:474.4px;font-size:10.4px;line-height:16px;color:#767676;letter-spacing:-0.581px;">1.00M</span>
<span class="t" style="top:468px;left:474.4px;font-size:10.4px;line-height:16px;color:#767676;letter-spacing:-0.581px;">2.00M</span>
<span class="t" style="top:353px;left:474.4px;font-size:10.4px;line-height:16px;color:#767676;letter-spacing:-0.581px;">3.00M</span>
<span class="t" style="top:239px;left:474.4px;font-size:10.4px;line-height:16px;color:#767676;letter-spacing:-0.581px;">4.00M</span>
<span class="t" style="top:133px;left:474.4px;font-size:10.4px;line-height:16px;color:#767676;letter-spacing:-0.581px;">5.00M</span>
<div class="r" style="left:518.3px;top:208px;width:82.5px;height:496px;background:#177f96;"></div>
<span class="t" style="top:710px;left:539.1px;font-size:10.6px;line-height:16px;color:#767676;letter-spacing:-0.222px;">0-1 Miles</span>
<div class="r" style="left:624.35px;top:150px;width:82.5px;height:554px;background:#177f96;"></div>
<span class="t" style="top:710px;left:645.1px;font-size:10.6px;line-height:16px;color:#767676;letter-spacing:-0.222px;">1-2 Miles</span>
<div class="r" style="left:730.4px;top:150px;width:82.5px;height:554px;background:#177f96;"></div>
<span class="t" style="top:710px;left:750.2px;font-size:10.6px;line-height:16px;color:#767676;letter-spacing:-0.296px;">10+ Miles</span>
<div class="r" style="left:836.45px;top:465.3px;width:82.5px;height:238.7px;background:#177f96;"></div>
<span class="t" style="top:710px;left:857.5px;font-size:10.6px;line-height:16px;color:#767676;letter-spacing:-0.278px;">2-5 Miles</span>
<div class="r" style="left:942.5px;top:402.3px;width:82.5px;height:301.7px;background:#177f96;"></div>
<span class="t" style="top:710px;left:960.7px;font-size:10.6px;line-height:16px;color:#767676;letter-spacing:-0.270px;">5-10 Miles</span>
<div class="r" style="left:1042px;top:114px;width:1px;height:620px;background:#e2e2e2;"></div>
<span class="t" style="top:121px;left:1049.5px;font-size:12.7px;line-height:18px;color:#3f4a5c;font-weight:700;letter-spacing:-0.541px;">Values</span>
<div class="r" style="left:1162px;top:124px;width:3px;height:3px;background:#7d8ea6;"></div>
<div class="r" style="left:1162px;top:129.5px;width:3px;height:3px;background:#7d8ea6;"></div>
<div class="r" style="left:1162px;top:135px;width:3px;height:3px;background:#7d8ea6;"></div>
<div class="r" style="left:1053px;top:145px;width:10px;height:10px;background:#187f97;"></div>
<span class="t" style="top:142px;left:1066.0px;font-size:12.7px;line-height:18px;color:#5a5a5a;letter-spacing:-1.154px;">Sales</span>
<div class="r" style="left:468px;top:735px;width:700px;height:1px;background:#d0d0d0;"></div>
<div class="r" style="left:700px;top:341px;width:198px;height:167px;background:#f8f8f8;border:2px solid #d4d4d4;border-radius:3px"></div>
<svg style="left:854px;top:362px" width="13" height="16" viewBox="0 0 13 16"><path d="M0.6 0.6H12.4L7 6.5V15H5V6.5Z" fill="none" stroke="#cc77cc" stroke-width="1.2"/></svg>
<svg style="left:847px;top:416.5px" width="19" height="19" viewBox="0 0 19 19"><circle cx="9.5" cy="9.5" r="8.8" fill="none" stroke="#b99bea" stroke-width="1.2"/><path d="M7 5.5L13 9.5L7 13.5Z" fill="#b99bea"/></svg>
<svg style="left:1155px;top:61px" width="13" height="10" viewBox="0 0 13 10"><path d="M0.5 5L6.5 0.8L12.5 5M0.5 9.5L6.5 5.3L12.5 9.5" fill="none" stroke="#e2e2e2" stroke-width="1.2"/></svg>
<!-- p5_ribbon -->
<svg style="left:0px;top:0px" width="74" height="64" viewBox="0 0 74 64"><path d="M29.1 9.1L23 15.7V43L12.2 37.8L20 28.3V19.8L3 39.6L29.1 53Z" fill="#b2b2b2"/><path d="M30 9.1L56.1 39.1L39.1 48.3V40.4L46.5 37.4L36.1 25.7V50.4L30 53.2Z" fill="#12b1de"/></svg>
<svg style="left:91px;top:0px" width="16" height="15" viewBox="0 0 16 15"><rect x="0" y="1.2" width="4" height="13.8" fill="#3cb52e"/><rect x="6" y="5" width="4" height="10" fill="#3cb52e"/><rect x="12.3" y="0" width="4" height="15" fill="#3cb52e"/></svg>
<svg style="left:138px;top:0px" width="16" height="15" viewBox="0 0 16 15"><circle cx="5" cy="1.8" r="2" fill="#f28b82"/><circle cx="10.8" cy="1.8" r="2" fill="#5ba7e0"/><circle cx="3" cy="8" r="2" fill="#3fb59f"/><circle cx="13" cy="8" r="2" fill="#9b6fd6"/><circle cx="8" cy="12" r="2" fill="#d96a2a"/></svg>
<svg style="left:91px;top:45.5px" width="16" height="16.5" viewBox="0 0 16 16.5"><path d="M0.8 11V1.2L9.5 11Z" fill="none" stroke="#5ba7d8" stroke-width="1.6"/><ellipse cx="11.2" cy="2" rx="4" ry="1.5" fill="#c8c8c8"/><path d="M7.4 3.6Q11.2 5.6 15 3.6V5.2Q12.5 6.6 9.2 6.2ZM9.8 7.3Q12.5 7.8 15 6.4V8Q13.5 9 11.2 8.9ZM11.8 10Q13.5 10 15 9.2V10.6Q14 11.3 12.8 11.2Z" fill="#c8c8c8"/><rect x="0.5" y="12.6" width="14.8" height="3.4" fill="none" stroke="#e8a050" stroke-width="1"/><path d="M3 12.6V14.5M5.5 12.6V14.5M8 12.6V14.5M10.5 12.6V14.5M13 12.6V14.5" stroke="#e8a050" stroke-width="0.7"/></svg>
<svg style="left:138.7px;top:47px" width="15" height="14" viewBox="0 0 15 14"><rect x="0" y="0" width="2" height="14" fill="#5ba7d8"/><rect x="3.2" y="5" width="2" height="9" fill="#5ba7d8"/><rect x="6.3" y="3.5" width="2" height="10.5" fill="#5ba7d8"/><rect x="9.4" y="2" width="2.2" height="12" fill="#5ba7d8"/><rect x="12.6" y="8" width="2" height="6" fill="#5ba7d8"/></svg>
<span class="t" style="top:-2px;left:182.8px;font-size:13px;line-height:19px;color:#b4b4b4;font-weight:700;">A</span>
<svg style="left:191px;top:0px" width="5" height="2.5" viewBox="0 0 5 2.5"><path d="M0 2.5L2.5 0L5 2.5Z" fill="#4a9fd3"/></svg>
<span class="t" style="top:-2px;left:209.8px;font-size:13px;line-height:19px;color:#b4b4b4;font-weight:700;">A</span>
<svg style="left:218px;top:0px" width="5" height="2.5" viewBox="0 0 5 2.5"><path d="M0 0H5L2.5 2.5Z" fill="#4a9fd3"/></svg>
<svg style="left:180px;top:33px" width="16.2" height="17" viewBox="0 0 16.2 17"><path d="M11 3.2L13.3 0.5L15.6 3.2Z" fill="#4a9fd3"/><rect x="0" y="4.8" width="16.2" height="5.2" fill="#c6c6c6"/><rect x="0" y="11.3" width="16.2" height="2.8" fill="#c6c6c6"/><rect x="0" y="15.2" width="16.2" height="1.1" fill="#c6c6c6"/></svg>
<svg style="left:207px;top:33px" width="16.2" height="17" viewBox="0 0 16.2 17"><path d="M11 0.5H15.6L13.3 3.2Z" fill="#4a9fd3"/><rect x="0" y="5.4" width="16.2" height="1.1" fill="#c6c6c6"/><rect x="0" y="7.8" width="16.2" height="2.8" fill="#c6c6c6"/><rect x="0" y="11.8" width="16.2" height="4.6" fill="#c6c6c6"/></svg>
<svg style="left:245px;top:0px" width="22" height="17" viewBox="0 0 22 17"><rect x="0.5" y="0" width="4" height="4" fill="none" stroke="#e8a050" stroke-width="1"/><rect x="0.5" y="6.2" width="4" height="4" fill="none" stroke="#e05a4a" stroke-width="1"/><rect x="0.5" y="12.4" width="4" height="4" fill="none" stroke="#3cb52e" stroke-width="1"/><path d="M7.4 2.3H22M7.4 8.3H22M7.4 14.3H22" stroke="#9c9c9c" stroke-width="0.9"/></svg>
<span class="t" style="top:29px;left:234.7px;font-size:11.8px;line-height:17px;color:#ececec;letter-spacing:-0.646px;">Legend</span>
<svg style="left:274px;top:35px" width="5.5" height="5" viewBox="0 0 5.5 5"><path d="M0 0H5.5 L2.75 5 Z" fill="#ececec"/></svg>
<svg style="left:299px;top:0px" width="31" height="23.5" viewBox="0 0 31 23.5"><path d="M0.4 5.8H17.5M0.4 14.3H12M2.2 0V18.5M11.6 0V13" stroke="#4a9fd3" stroke-width="1.1" fill="none"/><path d="M25 0.8A4.6 4.6 0 0 0 22.3 8.2L13.8 16.8A3.1 3.1 0 1 0 15.8 18.8L24.4 10.3A4.6 4.6 0 0 0 30.5 5.2L27.8 7.6L25.3 7L24.7 4.4L27.2 1.5Z" fill="none" stroke="#cfcfcf" stroke-width="1.1"/></svg>
<span class="t" style="top:29px;left:296.4px;font-size:11.8px;line-height:17px;color:#ececec;letter-spacing:-0.575px;">Trellis</span>
<svg style="left:326.4px;top:35px" width="5.5" height="5" viewBox="0 0 5.5 5"><path d="M0 0H5.5 L2.75 5 Z" fill="#ececec"/></svg>
<svg style="left:357.5px;top:-6px" width="27" height="27" viewBox="0 0 27 27"><circle cx="13.5" cy="13.5" r="12.5" fill="none" stroke="#4a6478" stroke-width="1.3" stroke-dasharray="16 3"/><path d="M10.5 8.5L18.5 13.5L10.5 18.5Z" fill="#4a6478"/></svg>
<span class="t" style="top:29px;left:349.0px;font-size:11.8px;line-height:17px;color:#767676;letter-spacing:-0.070px;">Motion</span>
<svg style="left:388.3px;top:35px" width="5.5" height="5" viewBox="0 0 5.5 5"><path d="M0 0H5.5 L2.75 5 Z" fill="#767676"/></svg>
<svg style="left:416px;top:0px" width="24" height="21" viewBox="0 0 24 21"><rect x="0" y="0" width="2.3" height="8" fill="#8e8e8e"/><rect x="3.5" y="0" width="2.3" height="8" fill="#8e8e8e"/><rect x="7" y="0" width="2.3" height="8" fill="#8e8e8e"/><rect x="10.5" y="0" width="2.3" height="8" fill="#8e8e8e"/><rect x="14" y="0" width="2.3" height="8" fill="#8e8e8e"/><rect x="17.5" y="0" width="2.3" height="8" fill="#8e8e8e"/><rect x="21" y="0" width="2.3" height="8" fill="#8e8e8e"/><path d="M0.4 11V21M23.6 11V21" stroke="#19b5f1" stroke-width="1"/><path d="M2 16H22" stroke="#d0d0d0" stroke-width="1.6" stroke-dasharray="1.6 1.4"/></svg>
<span class="t" style="top:29px;left:412.8px;font-size:11.8px;line-height:17px;color:#ececec;letter-spacing:-0.874px;">Range</span>
<span class="t" style="top:43px;left:410.0px;font-size:11.8px;line-height:17px;color:#ececec;letter-spacing:-0.528px;">Slider</span>
<svg style="left:440.7px;top:49px" width="5.5" height="5" viewBox="0 0 5.5 5"><path d="M0 0H5.5 L2.75 5 Z" fill="#ececec"/></svg>
<span class="t" style="top:62px;left:292.5px;font-size:11px;line-height:17px;color:#bcbcbc;letter-spacing:-1.010px;">GENERAL</span>
<svg style="left:478px;top:0px" width="30" height="20" viewBox="0 0 30 20"><path d="M3 0V1.5" stroke="#ccc" stroke-width="1" stroke-dasharray="1 1"/><path d="M10.5 0.5L12.5 2.5L10.5 4.5M13.5 0.5L15.5 2.5L13.5 4.5" fill="none" stroke="#4a9fd3" stroke-width="1"/><circle cx="3.6" cy="11" r="1.8" fill="#e8a050"/><circle cx="8" cy="9" r="1.8" fill="#9b6fd6"/><circle cx="11.5" cy="13" r="1.8" fill="#5ba7e0"/><circle cx="3.5" cy="17.5" r="1.8" fill="#5fae8a"/><circle cx="9" cy="18" r="1.8" fill="#e2664a"/><path d="M19.5 0V15.5H29.5V0M19.5 4.5H29.5M19.5 8.5H29.5M19.5 12.5H29.5M24.5 0V15.5" fill="none" stroke="#c8c8c8" stroke-width="1"/><path d="M14 16.5H22" stroke="#c8c8c8" stroke-width="1"/></svg>
<span class="t" style="top:29px;left:475.7px;font-size:11.8px;line-height:17px;color:#ececec;letter-spacing:-0.512px;">Format</span>
<span class="t" style="top:43px;left:479.0px;font-size:11.8px;line-height:17px;color:#ececec;letter-spacing:-0.654px;">Visual</span>
<svg style="left:533px;top:0px" width="30" height="20" viewBox="0 0 30 20"><path d="M0 4H30" stroke="#4a6478" stroke-width="1.2" stroke-dasharray="2 2"/><path d="M0 11H30" stroke="#4a6478" stroke-width="1.4" stroke-dasharray="5 2.5"/><path d="M0 17H30" stroke="#4a6478" stroke-width="1.2" stroke-dasharray="2.5 3"/></svg>
<span class="t" style="top:29px;left:539.0px;font-size:11.8px;line-height:17px;color:#767676;letter-spacing:-0.577px;">Line</span>
<span class="t" style="top:43px;left:533.2px;font-size:11.8px;line-height:17px;color:#767676;letter-spacing:-0.747px;">Style</span>
<svg style="left:559.5px;top:49px" width="5.5" height="5" viewBox="0 0 5.5 5"><path d="M0 0H5.5 L2.75 5 Z" fill="#767676"/></svg>
<!-- p6_overlay -->
<div class="r" style="left:581px;top:0px;width:274px;height:557px;background:#474747;"></div>
<div class="r" style="left:779px;top:17px;width:76px;height:540px;background:#565656;"></div>
<div class="r" style="left:779px;top:197px;width:76px;height:30px;background:#2b6ea2;"></div>
<svg style="left:0;top:0" width="1168" height="736"><path d="M779 17H855" stroke="#1a1a1a" stroke-width="1.7" stroke-dasharray="3 2" fill="none"/><path d="M779 47H855" stroke="#1a1a1a" stroke-width="1.7" stroke-dasharray="3 2" fill="none"/><path d="M779 77H855" stroke="#1a1a1a" stroke-width="1.7" stroke-dasharray="3 2" fill="none"/><path d="M779 107H855" stroke="#1a1a1a" stroke-width="1.7" stroke-dasharray="3 2" fill="none"/><path d="M779 137H855" stroke="#1a1a1a" stroke-width="1.7" stroke-dasharray="3 2" fill="none"/><path d="M779 167H855" stroke="#1a1a1a" stroke-width="1.7" stroke-dasharray="3 2" fill="none"/><path d="M779 197H855" stroke="#1a1a1a" stroke-width="1.7" stroke-dasharray="3 2" fill="none"/><path d="M779 227H855" stroke="#1a1a1a" stroke-width="1.7" stroke-dasharray="3 2" fill="none"/><path d="M779 257H855" stroke="#1a1a1a" stroke-width="1.7" stroke-dasharray="3 2" fill="none"/><path d="M779 287H855" stroke="#1a1a1a" stroke-width="1.7" stroke-dasharray="3 2" fill="none"/><path d="M779 317H855" stroke="#1a1a1a" stroke-width="1.7" stroke-dasharray="3 2" fill="none"/><path d="M779 347H855" stroke="#1a1a1a" stroke-width="1.7" stroke-dasharray="3 2" fill="none"/><path d="M779 377H855" stroke="#1a1a1a" stroke-width="1.7" stroke-dasharray="3 2" fill="none"/><path d="M779 407H855" stroke="#1a1a1a" stroke-width="1.7" stroke-dasharray="3 2" fill="none"/><path d="M779 437H855" stroke="#1a1a1a" stroke-width="1.7" stroke-dasharray="3 2" fill="none"/><path d="M779 467H855" stroke="#1a1a1a" stroke-width="1.7" stroke-dasharray="3 2" fill="none"/><path d="M779 497H855" stroke="#1a1a1a" stroke-width="1.7" stroke-dasharray="3 2" fill="none"/><path d="M779 527H855" stroke="#1a1a1a" stroke-width="1.7" stroke-dasharray="3 2" fill="none"/><path d="M779 557H855" stroke="#1a1a1a" stroke-width="1.7" stroke-dasharray="3 2" fill="none"/><path d="M779.5 17V557M854.5 17V557" stroke="#1c1c1c" stroke-width="1" stroke-dasharray="3 2" fill="none"/></svg>
<span class="t" style="top:-8px;left:817.0px;transform:translateX(-50%);font-size:12.7px;line-height:18px;color:#ececec;">All</span>
<span class="t" style="top:21px;left:587.5px;font-size:12.7px;line-height:18px;color:#fafafa;letter-spacing:-0.446px;">Column Chart</span>
<svg style="left:810px;top:25px" width="14" height="14" viewBox="0 0 14 14"><path d="M1 0V13M4.2 4.5V13M7.4 3V13M10.6 1.5V13M13.5 7.5V13" stroke="#dcdcdc" stroke-width="1.9"/></svg>
<span class="t" style="top:51px;left:587.5px;font-size:12.7px;line-height:18px;color:#fafafa;letter-spacing:-0.510px;">Line Chart</span>
<svg style="left:810px;top:55px" width="14" height="14" viewBox="0 0 14 14"><path d="M0.5 8L5 3.5L8 5.5L13.5 0.5M0.5 13L5 8.5L8 10.5L13.5 5.5" fill="none" stroke="#dcdcdc" stroke-width="1.1"/></svg>
<span class="t" style="top:81px;left:587.5px;font-size:12.7px;line-height:18px;color:#fafafa;letter-spacing:-0.532px;">Spline Chart</span>
<svg style="left:810px;top:85px" width="14" height="14" viewBox="0 0 14 14"><path d="M0 6C2.5 2 5 2 7 4S11.5 6 14 1.5M0 12C2.5 8 5 8 7 10S11.5 12 14 7.5" fill="none" stroke="#dcdcdc" stroke-width="1.1"/></svg>
<span class="t" style="top:111px;left:587.5px;font-size:12.7px;line-height:18px;color:#fafafa;letter-spacing:-0.550px;">Step Line Chart</span>
<svg style="left:810px;top:115px" width="14" height="14" viewBox="0 0 14 14"><path d="M0.5 13V0.5H4V5.5H7V1.5H10.5V5H13.5M1.5 11H4V7.5H7V10.5H10.5V7.5H13V12.5" fill="none" stroke="#dcdcdc" stroke-width="1.1"/></svg>
<span class="t" style="top:141px;left:587.5px;font-size:12.7px;line-height:18px;color:#fafafa;letter-spacing:-0.457px;">Point Chart</span>
<svg style="left:810px;top:145px" width="14" height="14" viewBox="0 0 14 14"><circle cx="2.5" cy="11.5" r="1.3" fill="#dcdcdc"/><circle cx="5" cy="7.5" r="1.3" fill="#dcdcdc"/><circle cx="8.5" cy="9.5" r="1.3" fill="#dcdcdc"/><circle cx="4" cy="3.5" r="1" fill="#dcdcdc"/><circle cx="9" cy="5" r="1.2" fill="#dcdcdc"/><circle cx="12.5" cy="2.5" r="1.3" fill="#dcdcdc"/></svg>
<span class="t" style="top:171px;left:587.5px;font-size:12.7px;line-height:18px;color:#fafafa;letter-spacing:-0.312px;">Lollipop Chart</span>
<svg style="left:810px;top:175px" width="14" height="14" viewBox="0 0 14 14"><path d="M2.5 6.5V14M7 4.5V14M11.5 6.5V14" stroke="#dcdcdc" stroke-width="1.1"/><circle cx="2.5" cy="4.6" r="1.9" fill="none" stroke="#dcdcdc" stroke-width="1"/><circle cx="7" cy="2.4" r="1.9" fill="none" stroke="#dcdcdc" stroke-width="1"/><circle cx="11.5" cy="4.6" r="1.9" fill="none" stroke="#dcdcdc" stroke-width="1"/></svg>
<span class="t" style="top:201px;left:587.5px;font-size:12.7px;line-height:18px;color:#fafafa;letter-spacing:-0.581px;">Area Chart</span>
<svg style="left:810px;top:206px" width="14" height="12.5" viewBox="0 0 14 12.5"><path d="M0 1L3.5 4.5L7 2L10.5 4.5L14 1V12H0Z" fill="#6fa6cf"/></svg>
<span class="t" style="top:231px;left:587.5px;font-size:12.7px;line-height:18px;color:#fafafa;letter-spacing:-0.485px;">Spline Area Chart</span>
<svg style="left:810px;top:236.5px" width="14" height="12.5" viewBox="0 0 14 12.5"><path d="M0 3C3 6 5 6 7 4.5S11 3 14 5V12H0Z" fill="#dcdcdc"/></svg>
<span class="t" style="top:261px;left:587.5px;font-size:12.7px;line-height:18px;color:#fafafa;letter-spacing:-0.505px;">Step Line Area Chart</span>
<svg style="left:810px;top:266.5px" width="14" height="12.5" viewBox="0 0 14 12.5"><path d="M0 5H3.5V2H7V4H10.5V6H14V12H0Z" fill="#dcdcdc"/></svg>
<span class="t" style="top:291px;left:587.5px;font-size:12.7px;line-height:18px;color:#fafafa;letter-spacing:-0.540px;">Stacked Area Chart</span>
<svg style="left:810px;top:296.5px" width="14" height="12.5" viewBox="0 0 14 12.5"><path d="M0 0.5L3.5 3.5L7 1.5L10.5 3.5L14 0.5V4L10.5 6.5L7 4.5L3.5 6.5L0 4Z" fill="#dcdcdc"/><path d="M0 6L3.5 8.5L7 6.5L10.5 8.5L14 6V12.5H0Z" fill="#dcdcdc"/></svg>
<span class="t" style="top:321px;left:587.5px;font-size:12.7px;line-height:18px;color:#fafafa;letter-spacing:-0.518px;">Spline Area Stacked Chart</span>
<svg style="left:810px;top:326.5px" width="14" height="12.5" viewBox="0 0 14 12.5"><path d="M0 1C3 3.5 5 3.5 7 2.5S11 1.5 14 1V4.5C11 5 9 6.5 7 6S3 6 0 4.5Z" fill="#dcdcdc"/><path d="M0 6.5C3 8 5 8 7 7.5S11 7 14 6.5V12.5H0Z" fill="#dcdcdc"/></svg>
<span class="t" style="top:351px;left:587.5px;font-size:12.7px;line-height:18px;color:#fafafa;letter-spacing:-0.558px;">Step Line Stacked Area Chart</span>
<svg style="left:810px;top:356.5px" width="14" height="12.5" viewBox="0 0 14 12.5"><path d="M2 0.5H6V3H9.5V5.5H13V8H9.5V6.5H6V4.5H2Z" fill="#dcdcdc"/><path d="M0 12.5V8.5H3.5V6H6V8H9.5V9.5H14V12.5Z" fill="#dcdcdc"/></svg>
<span class="t" style="top:381px;left:587.5px;font-size:12.7px;line-height:18px;color:#fafafa;letter-spacing:-0.571px;">Stacked 100% Area Chart</span>
<svg style="left:810px;top:386.5px" width="14" height="12.5" viewBox="0 0 14 12.5"><rect x="0" y="0" width="14" height="12" fill="#dcdcdc"/><path d="M0 6.5L3.5 8L7 6L10.5 8L14 6.5" fill="none" stroke="#555" stroke-width="1.2"/></svg>
<span class="t" style="top:411px;left:587.5px;font-size:12.7px;line-height:18px;color:#fafafa;letter-spacing:-0.566px;">Spline 100% Area Stacked Chart</span>
<svg style="left:810px;top:416.5px" width="14" height="12.5" viewBox="0 0 14 12.5"><rect x="0" y="0" width="14" height="12" fill="#dcdcdc"/><path d="M0 6C3 8 5 8 7 6.8S11 5.5 14 7" fill="none" stroke="#555" stroke-width="1.2"/></svg>
<span class="t" style="top:441px;left:587.5px;font-size:12.7px;line-height:18px;color:#fafafa;letter-spacing:-0.571px;">Step Line 100% Stacked Area Chart</span>
<svg style="left:810px;top:446.5px" width="14" height="12.5" viewBox="0 0 14 12.5"><rect x="0" y="0" width="14" height="12" fill="#dcdcdc"/><path d="M0 5H3.5V8H7V5.5H10.5V8.5H14" fill="none" stroke="#555" stroke-width="1.2"/></svg>
<span class="t" style="top:471px;left:587.5px;font-size:12.7px;line-height:18px;color:#fafafa;letter-spacing:-0.540px;">Stream Area Chart</span>
<svg style="left:809px;top:475px" width="16" height="14" viewBox="0 0 16 14"><path d="M0 2L5 5L11 0L16 3V11L11 14L5 9L0 12Z" fill="#e8806a"/><path d="M0 4.5L5 6L11 2.2L16 5V9L11 11.8L5 8L0 9.5Z" fill="#fff"/><path d="M0 5.8L5 6.6L11 4.2L16 6.2V7.8L11 9.8L5 7.4L0 8.2Z" fill="#4a9fd3"/></svg>
<span class="t" style="top:501px;left:587.5px;font-size:12.7px;line-height:18px;color:#fafafa;letter-spacing:-0.561px;">Stream Spline Chart</span>
<svg style="left:809px;top:505px" width="16" height="14" viewBox="0 0 16 14"><path d="M0 2C4 7 6 0 11 0S16 3 16 3V11S15 14 11 14S4 7 0 12Z" fill="#e8806a"/><path d="M0 4.5C4 7 6 2.2 11 2.2S16 5 16 5V9S15 11.8 11 11.8S4 7 0 9.5Z" fill="#fff"/><path d="M0 5.8C4 7 6 4.2 11 4.2S16 6 16 7S15 9.8 11 9.8S4 7 0 8.2Z" fill="#4a9fd3"/></svg>
<span class="t" style="top:531px;left:587.5px;font-size:12.7px;line-height:18px;color:#fafafa;letter-spacing:-0.569px;">Stream Step Chart</span>
<svg style="left:809px;top:535px" width="16" height="14" viewBox="0 0 16 14"><path d="M0 3H6V0.5H16V13.5H6V11H0Z" fill="#e8806a"/><path d="M0 4.8H7.5V2.2H14.5V11.8H7.5V9.2H0Z" fill="#fff"/><path d="M0 6H9V3.8H13V10.2H9V8H0Z" fill="#4a9fd3"/></svg>
<div class="r" style="left:411px;top:216px;width:170.5px;height:90px;background:#474747;border-left:1px solid #2a2a2a;border-top:1px solid #2a2a2a;border-right:1px solid #2a2a2a"></div>
<div class="r" style="left:411px;top:245.5px;width:170.5px;height:1.5px;background:#2a2a2a;"></div>
<div class="r" style="left:411px;top:275px;width:170.5px;height:1.5px;background:#2a2a2a;"></div>
<div class="r" style="left:412px;top:276px;width:169px;height:30px;background:#2b6ea2;"></div>
<svg style="left:573px;top:239px" width="5" height="5" viewBox="0 0 5 5"><path d="M5 0V5H0Z" fill="#8c8c8c"/></svg>
<svg style="left:573px;top:269px" width="5" height="5" viewBox="0 0 5 5"><path d="M5 0V5H0Z" fill="#8c8c8c"/></svg>
<svg style="left:573px;top:299px" width="5" height="5" viewBox="0 0 5 5"><path d="M5 0V5H0Z" fill="#8c8c8c"/></svg>
<span class="t" style="top:220px;left:414.5px;font-size:16px;line-height:22px;color:#cfcfcf;">y</span>
<span class="t" style="top:226px;left:422.6px;font-size:9px;line-height:15px;color:#cfcfcf;">1</span>
<span class="t" style="top:223px;left:431.6px;font-size:12.7px;line-height:18px;color:#f2f2f2;font-weight:700;letter-spacing:-1.049px;">Primary Axis</span>
<span class="t" style="top:250px;left:414.5px;font-size:16px;line-height:22px;color:#cfcfcf;">y</span>
<span class="t" style="top:256px;left:422.6px;font-size:9px;line-height:15px;color:#cfcfcf;">2</span>
<span class="t" style="top:253px;left:431.6px;font-size:12.7px;line-height:18px;color:#f2f2f2;font-weight:700;letter-spacing:-1.094px;">Secondary Axis</span>
<svg style="left:415px;top:285px" width="11" height="11" viewBox="0 0 11 11"><path d="M2.5 0V11M0 2.5H11M0 5.5H11M0 8.5H11" stroke="#ececec" stroke-width="1" fill="none"/></svg>
<span class="t" style="top:284px;left:431.6px;font-size:12.7px;line-height:18px;color:#f2f2f2;font-weight:700;letter-spacing:-0.844px;">Trellis</span>
<div class="r" style="left:404px;top:268px;width:182.5px;height:44px;border:3px solid #06f906;box-shadow:1px 2px 3px rgba(0,0,0,.45), inset 1px 2px 3px rgba(0,0,0,.3);"></div>
<div class="r" style="left:44px;top:546px;width:120px;height:26px;border:3px solid #06f906;box-shadow:1px 2px 3px rgba(0,0,0,.45), inset 1px 2px 3px rgba(0,0,0,.3);"></div>
<svg style="left:0;top:0" width="1168" height="736"><g style="filter:drop-shadow(2px 3px 2px rgba(0,0,0,.5))"><path d="M178.6 562.7C182.3 562.9 192.4 564.0 201.0 563.6C209.6 563.2 220.3 561.8 230.0 560.2C239.7 558.6 249.3 556.9 259.0 554.0C268.7 551.1 278.3 547.2 288.0 543.0C297.7 538.8 307.5 534.1 317.0 529.0C326.5 523.9 335.8 518.2 345.0 512.5C354.2 506.8 363.2 500.8 372.0 494.5C380.8 488.2 389.3 481.6 398.0 474.6C406.7 467.6 415.3 459.9 424.0 452.5C432.7 445.1 441.3 437.3 450.0 430.0C458.7 422.7 467.3 415.7 476.0 408.5C484.7 401.3 493.3 394.2 502.0 387.0C510.7 379.8 519.3 372.3 528.0 365.0C536.7 357.7 544.5 350.8 554.0 343.0C563.5 335.2 574.6 326.1 585.0 318.0C595.4 309.9 605.9 302.2 616.3 294.7C626.7 287.2 637.1 279.7 647.5 272.8C657.9 265.9 668.4 259.2 678.8 253.4C689.2 247.6 699.6 242.5 710.0 237.9C720.4 233.3 732.3 228.9 741.3 226.0C750.3 223.1 758.4 221.5 764.0 220.2C769.6 218.9 773.2 218.5 775.0 218.2" fill="none" stroke="#06f906" stroke-width="4.4" stroke-dasharray="12.4 3.5" stroke-dashoffset="0"/><circle cx="179" cy="562.7" r="1.9" fill="#06f906"/><path d="M776.4 210.6L788.8 216.1L777.4 223Z" fill="#06f906"/></g></svg>
<div class="r" style="left:802px;top:220px;width:140px;height:24px;background:#f7a955;border:1px solid #c9651e;border-radius:5px"></div>
<svg style="left:808px;top:226px" width="11" height="10" viewBox="0 0 11 10"><rect x="0" y="4" width="3" height="6" fill="#ffffff"/><rect x="4" y="2" width="3" height="8" fill="#ffffff"/><rect x="8" y="0" width="3" height="10" fill="#ffffff"/></svg>
<span class="t" style="top:223px;left:825.6px;font-size:12.7px;line-height:18px;color:#fff3e6;letter-spacing:-0.972px;">Expenses</span>
</body></html>
